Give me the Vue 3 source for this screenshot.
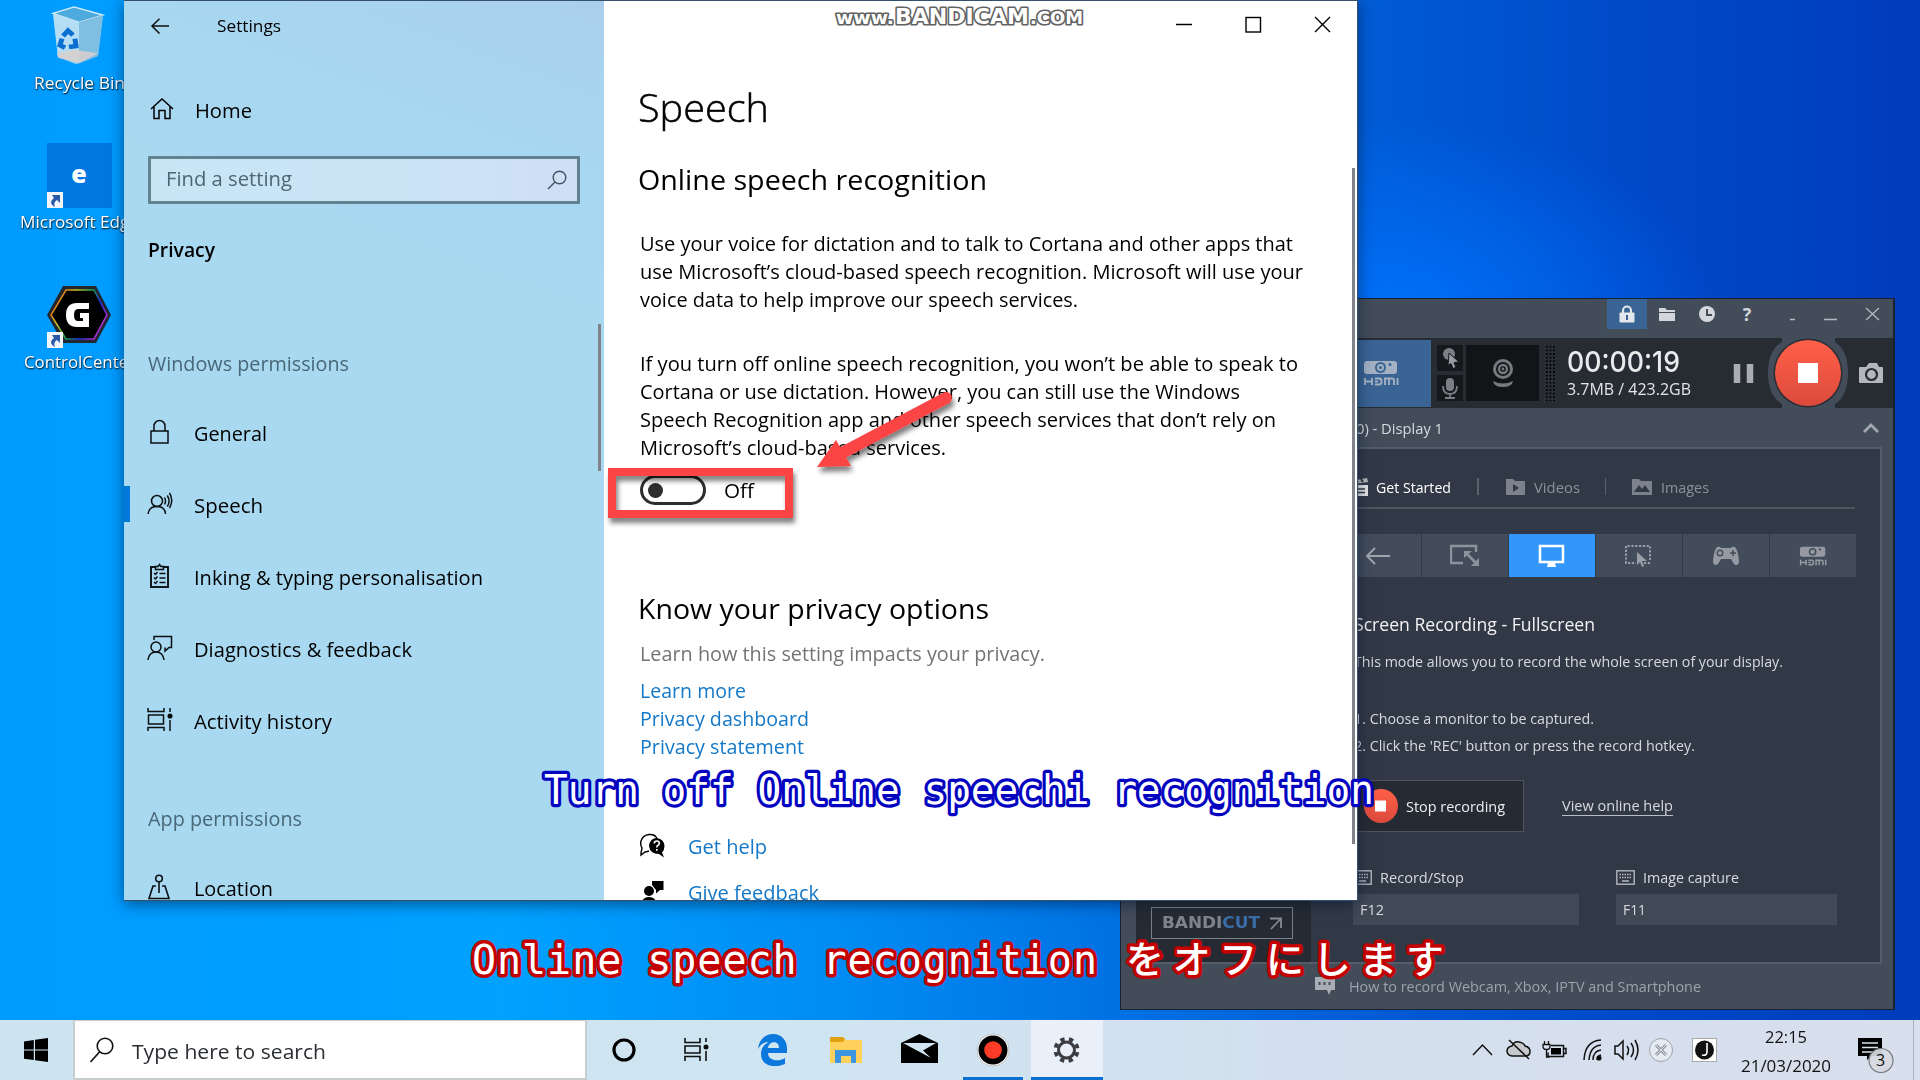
<script setup>
// Squeezes a line of text to the given width and keeps the layout box in step.
const vFit = {
  mounted(el, { value }) {
    const natural = el.getBoundingClientRect().width
    if (!natural) return
    el.style.transformOrigin = '0 50%'
    el.style.transform = `scaleX(${value / natural})`
    el.style.marginRight = `${value - natural}px`
  },
}

const nav = [
  { id: 'lock', label: 'General', w: 73 },
  { id: 'speech', label: 'Speech', w: 69, active: true },
  { id: 'ink', label: 'Inking & typing personalisation', w: 289 },
  { id: 'diag', label: 'Diagnostics & feedback', w: 218 },
  { id: 'history', label: 'Activity history', w: 138 },
]
const p1 = [
  ['Use your voice for dictation and to talk to Cortana and other apps that', 653],
  ['use Microsoft’s cloud-based speech recognition. Microsoft will use your', 663],
  ['voice data to help improve our speech services.', 438],
]
const p2 = [
  ['If you turn off online speech recognition, you won’t be able to speak to', 658],
  ['Cortana or use dictation. However, you can still use the Windows', 600],
  ['Speech Recognition app and other speech services that don’t rely on', 636],
  ['Microsoft’s cloud-based services.', 306],
]
const links = [
  ['Learn more', 106],
  ['Privacy dashboard', 169],
  ['Privacy statement', 164],
]
</script>

<template>
  <div class="desktop">
    <div class="shortcuts">
      <div class="shortcut">
        <svg width="66" height="60" viewBox="0 0 66 66" preserveAspectRatio="none">
          <path d="M7 8 28 1 57 10 52 55 30 64 12 56Z" fill="#9fd3ef" opacity=".85" />
          <path d="M7 8 28 1 57 10 33 18Z" fill="#4ea9dc" stroke="#d8eef8" stroke-width="1.5" />
          <path d="M33 18 57 10 52 55 33 63Z" fill="#7fbfe2" />
          <path d="M7 8 33 18V63L12 56Z" fill="#b5def5" />
          <path d="M11 52 28 48 52 52 33 63 12 57Z" fill="#d9cfcc" opacity=".85" />
          <g fill="none" stroke="#0a6fd0" stroke-width="5">
            <path d="M17 33l5-6 5 5" /><path d="M29 36l1 8-7 1" /><path d="M19 46l-5-3 2-7" />
          </g>
        </svg>
        <span v-fit="91" class="s-label">Recycle Bin</span>
      </div>
      <div class="shortcut">
        <div class="edge-tile">
          <span class="edge-e">e</span>
          <svg class="link-arrow" width="16" height="16" viewBox="0 0 16 16"><rect width="16" height="16" fill="#f2f6fa" /><path d="M5 3h8v8l-3-3c-3 2-3 4-2 7C3 12 3 9 7 6Z" fill="#2a59a8" /></svg>
        </div>
        <span v-fit="119" class="s-label">Microsoft Edge</span>
      </div>
      <div class="shortcut">
        <div class="hex">
          <svg width="64" height="58" viewBox="0 0 64 58">
            <defs><linearGradient id="rgb" x1="0" x2="1" y1="0" y2=".5"><stop offset="0" stop-color="#e02a10" /><stop offset=".35" stop-color="#d0c020" /><stop offset=".6" stop-color="#18a050" /><stop offset=".8" stop-color="#2030e0" /><stop offset="1" stop-color="#a030d0" /></linearGradient></defs>
            <path d="M16 0H49L64 29 49 57H16L0 29Z" fill="#22262e" />
            <path d="M19 4H47L60 29 47 53H19L4 29Z" fill="#000" stroke="url(#rgb)" stroke-width="1.6" />
            <path d="M42 17H30Q19 17 19 29T30 41H42V27H33V32H36V35H31Q27 35 27 29T31 23H42Z" fill="#fff" />
          </svg>
          <svg class="link-arrow" width="16" height="16" viewBox="0 0 16 16"><rect width="16" height="16" fill="#f2f6fa" /><path d="M5 3h8v8l-3-3c-3 2-3 4-2 7C3 12 3 9 7 6Z" fill="#2a59a8" /></svg>
        </div>
        <span v-fit="111" class="s-label">ControlCenter</span>
      </div>
    </div>

    <section class="bandi">
      <header class="b-head">
        <span class="b-lock"><svg width="18" height="18" viewBox="0 0 18 18"><path d="M5 8V5.500a4 4 0 0 1 8 0V8" fill="none" stroke="#e4e8ed" stroke-width="2.200" /><rect x="1.500" y="7.500" width="15" height="10" rx="1" fill="#e4e8ed" /><path d="M9 10v5" stroke="#3a6494" stroke-width="2" /></svg></span>
        <svg width="40" height="30" viewBox="0 0 40 30"><path d="M12 9h6l2 2h8v2H12ZM12 14H28V22H12Z" fill="#d3d7dc" /></svg>
        <svg width="40" height="30" viewBox="0 0 40 30"><circle cx="20" cy="15" r="8" fill="#d3d7dc" /><path d="M20 10v6h5" fill="none" stroke="#434c59" stroke-width="2" /></svg>
        <span class="q">?</span>
        <svg width="125" height="30" viewBox="6 0 125 30"><path d="M29 20.500h5M63 20.500h13" stroke="#b4bac2" stroke-width="1.500" /><path d="M105 9l13 12M118 9l-13 12" stroke="#b4bac2" stroke-width="1.300" /></svg>
      </header>
      <div class="b-tools">
        <span class="hdmi-tile">
          <svg width="36" height="26" viewBox="0 0 36 26"><rect x="1" y="1" width="33" height="13" rx="3" fill="#a3b1c3" /><circle cx="17.500" cy="7.500" r="5.500" fill="#3a6494" /><circle cx="17.500" cy="7.500" r="3.500" fill="#a3b1c3" /><circle cx="17.500" cy="7.500" r="1.600" fill="#3a6494" /><circle cx="27" cy="4.500" r="1.500" fill="#3a6494" /><path d="M2 18v7M2 21.500h7M9 18v7M12 18.500h4q2.500 0 2.500 2.500v1q0 2.500-2.500 2.500h-4M12 21.500h3M22 25v-6.500h4v6.500M26 18.500h3q2 0 2 2v4.500M34.500 18v7" fill="none" stroke="#a3b1c3" stroke-width="1.900" /></svg>
        </span>
        <div class="minis">
          <span><svg width="26" height="26" viewBox="0 0 26 26"><circle cx="12" cy="9" r="6" fill="#7b7f85" /><path d="M12 8l10 9-5 .5 2 5-3 1-2-5-3 2Z" fill="#999da3" stroke="#16181b" /></svg></span>
          <span><svg width="26" height="26" viewBox="0 0 26 26"><rect x="9" y="3" width="8" height="13" rx="4" fill="#7b7f85" /><path d="M6 11q0 8 7 8t7-8M13 19v4M8 23h10" fill="none" stroke="#7b7f85" stroke-width="1.800" /></svg></span>
        </div>
        <span class="cam"><svg width="30" height="32" viewBox="0 0 30 32"><circle cx="15" cy="12" r="8.500" fill="none" stroke="#76797e" stroke-width="3" /><circle cx="15" cy="12" r="4" fill="none" stroke="#76797e" stroke-width="2.400" /><circle cx="15" cy="12" r="1.400" fill="#76797e" /><path d="M5 24q10 5 20 0-1 6-10 6T5 24Z" fill="#76797e" /></svg></span>
        <span class="meter"></span>
        <div class="clock">
          <span v-fit="113" class="digits">00:00:19</span>
          <span v-fit="124" class="size">3.7MB / 423.2GB</span>
        </div>
        <svg class="rec" width="194" height="70" viewBox="0 0 194 70">
          <path d="M48 26v19M61 26v19" stroke="#a9adb3" stroke-width="6.500" />
          <path d="M93 0H146V4Q159 12 159 35T146 66V70H93V66Q79 58 79 35T93 4Z" fill="#434c59" />
          <circle cx="119" cy="35" r="34.500" fill="#2a2d34" />
          <circle cx="119" cy="35" r="33" fill="url(#redg)" />
          <defs><linearGradient id="redg" x1="0" x2="0" y1="0" y2="1"><stop offset="0" stop-color="#ff6049" /><stop offset="1" stop-color="#dc4a3b" /></linearGradient></defs>
          <rect x="109" y="25" width="20" height="20" fill="#fff" />
          <path d="M171 29h6l3-4h8l2 4h3q1 0 1 1v14q0 1-1 1h-22q-1 0-1-1V30q0-1 1-1Z" fill="#b3b7bd" />
          <circle cx="182.500" cy="36.500" r="5.500" fill="none" stroke="#272c33" stroke-width="2.200" />
        </svg>
      </div>
      <div class="b-info">
        <span v-fit="87">0) - Display 1</span>
        <svg width="18" height="12" viewBox="0 0 18 12"><path d="M2 10l7-7 7 7" fill="none" stroke="#a3a8b0" stroke-width="2.800" /></svg>
      </div>
      <div class="b-body">
        <aside class="b-side">
          <div class="bandicut"><b v-fit="98"><i>BANDI</i><em>CUT</em></b><svg width="14" height="14" viewBox="0 0 14 14"><path d="M1 2.500H12V12M12 2.500 2 13" fill="none" stroke="#858b94" stroke-width="1.800" /></svg></div>
        </aside>
        <main class="b-main">
          <div class="tabs">
            <svg width="18" height="20" viewBox="0 0 18 20"><path d="M0 8H17V19H0Z" fill="#e6e6e6" /><path d="M0 4 16 1l1 4L1 7.500Z" fill="#bbb" /><path d="M5 3l2 3M10 2l2 3" stroke="#323946" stroke-width="2" /><path d="M4 12h10M4 15.500h10" stroke="#323946" stroke-width="1.500" /></svg>
            <span v-fit="75" class="on">Get Started</span><i class="sep"></i>
            <svg width="19" height="18" viewBox="0 0 19 18"><path d="M0 1H7l2 2h10V17H0Z" fill="#7b828c" /><path d="M7 6l6 4-6 4Z" fill="#323946" /></svg>
            <span v-fit="46" class="tx">Videos</span><i class="sep s2"></i>
            <svg width="20" height="18" viewBox="0 0 20 18"><path d="M0 1H7l2 2h11V17H0Z" fill="#7b828c" /><path d="M2 14l5-7 3 4 3-4 5 7Z" fill="#323946" /></svg>
            <span v-fit="48" class="tx">Images</span>
          </div>
          <div class="modes">
            <span><svg width="26" height="18" viewBox="0 0 26 18"><path d="M25 9H2M10 1 2 9l8 8" fill="none" stroke="#a1a6ae" stroke-width="2" /></svg></span>
            <span><svg width="30" height="24" viewBox="0 0 30 24"><path d="M13 19H1V2H26V8" fill="none" stroke="#8d939c" stroke-width="2.400" /><path d="M16 9l11 11" stroke="#8d939c" stroke-width="2.600" /><path d="M14 7h8l-8 7ZM29 22h-8l8-8Z" fill="#8d939c" /></svg></span>
            <span class="sel"><svg width="28" height="24" viewBox="0 0 28 24"><rect x="2" y="2" width="23" height="16" fill="none" stroke="#fff" stroke-width="2.500" /><path d="M10 19h7l1 4H9Z" fill="#fff" /></svg></span>
            <span><svg width="30" height="24" viewBox="0 0 30 24"><path d="M26 16V2H2V19H12M20 19h6" fill="none" stroke="#9ba0a8" stroke-width="2" stroke-dasharray="2.200 1.600" /><path d="M13 8l10 9h-5l2 5-2 1-2-5-3 3Z" fill="#9ba0a8" /></svg></span>
            <span><svg width="30" height="22" viewBox="0 0 30 22"><path d="M6 2q3-1 4 1h10q1-2 4-1 3 3 4 14 0 4-3 4-2 0-5-6H10q-3 6-5 6-3 0-3-4Q3 5 6 2Z" fill="#959aa2" /><circle cx="9" cy="8" r="2.800" fill="none" stroke="#434c59" stroke-width="1.400" /><path d="M22 5v6M19 8h6" stroke="#434c59" stroke-width="1.500" /></svg></span>
            <span><svg width="28" height="20" viewBox="0 0 36 26"><rect x="1" y="1" width="33" height="13" rx="3" fill="#959aa2" /><circle cx="17.500" cy="7.500" r="5" fill="#434c59" /><circle cx="17.500" cy="7.500" r="3" fill="#959aa2" /><circle cx="27" cy="4.500" r="1.500" fill="#434c59" /><path d="M2 18v7M2 21.500h7M9 18v7M12 18.500h4q2.500 0 2.500 2.500v1q0 2.500-2.500 2.500h-4M12 21.500h3M22 25v-6.500h4v6.500M26 18.500h3q2 0 2 2v4.500M34.500 18v7" fill="none" stroke="#959aa2" stroke-width="2" /></svg></span>
          </div>
          <h3><span v-fit="241">Screen Recording - Fullscreen</span></h3>
          <p class="mode-text"><span v-fit="429">This mode allows you to record the whole screen of your display.</span></p>
          <ol class="steps">
            <li><span v-fit="240">1. Choose a monitor to be captured.</span></li>
            <li><span v-fit="341">2. Click the 'REC' button or press the record hotkey.</span></li>
          </ol>
          <div class="actions">
            <div class="stop">
              <svg width="34" height="36" viewBox="0 0 34 36"><ellipse cx="17" cy="18" rx="17" ry="17" fill="url(#redg)" /><rect x="11" y="12.500" width="11" height="11" fill="#fff" /></svg>
              <span v-fit="99">Stop recording</span>
            </div>
            <span v-fit="111" class="help">View online help</span>
          </div>
          <div class="keys">
            <div class="key k1">
              <label><svg width="19" height="15" viewBox="0 0 19 15"><rect x=".8" y=".8" width="17.400" height="13.400" fill="none" stroke="#b3b8bf" stroke-width="1.400" /><path d="M3.500 4.500h12M3.500 7.500h12" stroke="#b3b8bf" stroke-width="1.500" stroke-dasharray="1.500 1" /><path d="M6 11h7" stroke="#b3b8bf" stroke-width="1.500" /></svg><span v-fit="84">Record/Stop</span></label>
              <div class="field"><span v-fit="24">F12</span></div>
            </div>
            <div class="key k2">
              <label><svg width="19" height="15" viewBox="0 0 19 15"><rect x=".8" y=".8" width="17.400" height="13.400" fill="none" stroke="#b3b8bf" stroke-width="1.400" /><path d="M3.500 4.500h12M3.500 7.500h12" stroke="#b3b8bf" stroke-width="1.500" stroke-dasharray="1.500 1" /><path d="M6 11h7" stroke="#b3b8bf" stroke-width="1.500" /></svg><span v-fit="96">Image capture</span></label>
              <div class="field"><span v-fit="23">F11</span></div>
            </div>
          </div>
        </main>
      </div>
      <footer class="b-foot">
        <svg width="22" height="20" viewBox="0 0 22 20"><path d="M1 1H21V14H17L15 19 13 14H1Z" fill="#a9aeb6" /><path d="M5.500 6v3M10.500 6v3M15.500 6v3" stroke="#434c59" stroke-width="2" /></svg>
        <span v-fit="352">How to record Webcam, Xbox, IPTV and Smartphone</span>
      </footer>
    </section>

    <section class="settings">
      <aside class="side">
        <div class="bar">
          <svg width="20" height="18" viewBox="0 0 20 18"><path d="M19 8H2M9.500 0.700 2 8l7.500 7.500" fill="none" stroke="#111" stroke-width="1.500" /></svg>
          <span v-fit="64">Settings</span>
        </div>
        <div class="home">
          <svg width="24" height="22" viewBox="0 0 24 22"><path d="M1 11 12 1 23 11M4 9V20.500H9V12.500h6V20.500H20V9" fill="none" stroke="#000" stroke-width="1.500" /></svg>
          <span v-fit="57">Home</span>
        </div>
        <div class="find">
          <span v-fit="126">Find a setting</span>
          <svg width="20" height="20" viewBox="0 0 20 20"><circle cx="12.500" cy="7.500" r="6.300" fill="none" stroke="#3d5561" stroke-width="1.400" /><path d="M8 12 1 19" stroke="#3d5561" stroke-width="1.500" /></svg>
        </div>
        <div class="privacy"><span v-fit="67">Privacy</span></div>
        <div class="group g1"><span v-fit="201">Windows permissions</span></div>
        <nav>
          <div v-for="n in nav" :key="n.id" class="item" :class="{ active: n.active }">
            <svg width="26" height="26" viewBox="0 0 26 26" fill="none" stroke="#0b0f12" stroke-width="1.500">
              <g v-if="n.id === 'lock'"><rect x="4" y="12" width="17" height="12" /><path d="M7 12V7a5.500 5.500 0 0 1 11 0V12" /></g>
              <g v-if="n.id === 'speech'"><circle cx="10" cy="10" r="5.500" /><path d="M1 23q1-7.500 9-7.500t8.500 7.500M17.500 6.500q2 3.500 0 7M20.300 4.500q3.500 5.500 0 11M22.500 2q4.500 7.500 0 15" /></g>
              <g v-if="n.id === 'ink'"><rect x="4" y="4" width="17" height="20" stroke-width="1.900" /><path d="M8.500 6.500V3.500H11L12.500 1.500 14 3.500H16.500V6.500Z" fill="#a8d9f1" /><path d="M12.500 10.500h6M12.500 15h6M12.500 19.500h6M7 10l1.500 1.500 2-2.500M7 14.500 8.500 16l2-2.500M7 19l1.500 1.500 2-2.500" /></g>
              <g v-if="n.id === 'diag'"><path d="M7 5V1.500H24.500V12.500H22L18 16V12.500" /><circle cx="9" cy="12" r="5" /><path d="M1 25q1-8 8-8t8 8" /></g>
              <g v-if="n.id === 'history'"><path d="M1 1v3.500h16V1M1 24v-3.500h16V24M1.500 8h15v9h-15ZM23 1v4M23 13v11" /><circle cx="23" cy="9" r="1.800" fill="#000" /></g>
            </svg>
            <span v-fit="n.w">{{ n.label }}</span>
          </div>
        </nav>
        <div class="group g2"><span v-fit="154">App permissions</span></div>
        <div class="item loc">
          <svg width="26" height="26" viewBox="0 0 26 26" fill="none" stroke="#0b0f12" stroke-width="1.600"><circle cx="12" cy="4.500" r="3.300" /><path d="M12 8v11M9 12H6L2 24.500H22L18 12h-3" /></svg>
          <span v-fit="79">Location</span>
        </div>
        <i class="thumb side-thumb"></i>
      </aside>
      <main class="content">
        <div class="controls">
          <svg width="69" height="50" viewBox="0 0 69 50"><path d="M26 23.500H42" stroke="#000" stroke-width="1.500" /></svg>
          <svg width="69" height="50" viewBox="0 0 69 50"><rect x="27" y="16.500" width="14.500" height="14.500" fill="none" stroke="#000" stroke-width="1.400" /></svg>
          <svg width="69" height="50" viewBox="0 0 69 50"><path d="M27 16 42 31M42 16 27 31" stroke="#000" stroke-width="1.400" /></svg>
        </div>
        <h1><span v-fit="131">Speech</span></h1>
        <h2 class="first"><span v-fit="349">Online speech recognition</span></h2>
        <div class="para a"><div v-for="l in p1" :key="l[0]"><span v-fit="l[1]">{{ l[0] }}</span></div></div>
        <div class="para b"><div v-for="l in p2" :key="l[0]"><span v-fit="l[1]">{{ l[0] }}</span></div></div>
        <div class="toggle-row"><span class="toggle"><i></i></span><span v-fit="30">Off</span></div>
        <h2 class="second"><span v-fit="351">Know your privacy options</span></h2>
        <div class="learn"><span v-fit="405">Learn how this setting impacts your privacy.</span></div>
        <div class="links"><a v-for="l in links" :key="l[0]"><span v-fit="l[1]">{{ l[0] }}</span></a></div>
        <div class="support">
          <a><svg width="26" height="26" viewBox="0 0 26 26"><path d="M9 18q-3 1-4 1l-4 3V20l1-5q-2-3-1-7 2-6 8-6.500 6-.5 8 4" fill="none" stroke="#000" stroke-width="1.400" /><path d="M17 5q7 1 7.500 8 0 4-2.500 6.500l2 5-5-3.500q-9 0-10-8 1-8 8-8Z" fill="#000" /><path d="M14.300 10.500q0-2.500 2.500-2.500t2.500 2.200q0 1.300-1.300 2t-1.200 2.300M16.800 16v1.800" fill="none" stroke="#fff" stroke-width="1.600" /></svg><span v-fit="79">Get help</span></a>
          <a><svg width="26" height="26" viewBox="0 0 26 26"><circle cx="9" cy="12" r="5" fill="#000" /><path d="M1 26q1-8 8-8t8 8ZM12 2H23.500V11H20l-4 3.500V11L12 6Z" fill="#000" /></svg><span v-fit="131">Give feedback</span></a>
        </div>
        <i class="thumb main-thumb"></i>
      </main>
    </section>

    <svg class="overlay" width="1920" height="1080" viewBox="0 0 1920 1080">
      <defs><filter id="sh" x="-20%" y="-20%" width="140%" height="150%"><feDropShadow dx="2" dy="5" stdDeviation="2.500" flood-color="#000" flood-opacity=".5" /></filter></defs>
      <g filter="url(#sh)">
        <path d="M608 468H793V518H608ZM616 476V510H785V476Z" fill="#fb4444" fill-rule="evenodd" />
        <path d="M840 454 946 398" stroke="#fb4444" stroke-width="12" stroke-linecap="round" />
        <path d="M817 467 836 440 851 466Z" fill="#fb4444" />
      </g>
      <g class="mark"><text x="836" y="23.500" font-size="17" textLength="58" lengthAdjust="spacingAndGlyphs">www.</text><text x="895" y="23.500" font-size="21" textLength="134" lengthAdjust="spacingAndGlyphs">BANDICAM</text><text x="1030" y="23.500" font-size="17" textLength="53" lengthAdjust="spacingAndGlyphs">.COM</text></g>
      <text class="cap blue" x="544" y="804" textLength="830" lengthAdjust="spacingAndGlyphs">Turn off Online speechi recognition</text>
      <text class="cap red" x="472" y="973.500" textLength="625" lengthAdjust="spacing">Online speech recognition</text>
      <text class="cap red jp" x="1126" y="973" textLength="318" lengthAdjust="spacing">をオフにします</text>
    </svg>

    <footer class="taskbar">
      <span class="start"><svg width="24" height="24" viewBox="0 0 24 24"><path d="M0 3.500 9.800 2V11.500H0ZM11 1.800 24 0V11.500H11ZM0 12.600H9.800V22L0 20.700ZM11 12.600H24V24L11 22.200Z" fill="#000" /></svg></span>
      <div class="search"><svg width="26" height="26" viewBox="0 0 26 26"><circle cx="16" cy="9" r="7.800" fill="none" stroke="#111" stroke-width="1.600" /><path d="M10.500 15 1.500 25" stroke="#111" stroke-width="1.700" /></svg><span v-fit="194">Type here to search</span></div>
      <div class="apps">
        <svg width="73" height="60" viewBox="587 1020 73 60"><circle cx="624" cy="1050" r="10" fill="none" stroke="#000" stroke-width="3.200" /></svg>
        <svg width="73" height="60" viewBox="660 1020 73 60" fill="none" stroke="#111" stroke-width="1.600"><path d="M685 1038v4.500h15V1038M685 1061v-4.500h15V1061M685 1046h15v7h-15ZM706 1038v4M706 1051v10" /><circle cx="706" cy="1047" r="1.700" fill="#000" /></svg>
        <svg width="73" height="60" viewBox="733 1020 73 60"><path d="M758 1049C759 1039 766 1034 773 1034 782 1034 787 1041 787 1048V1053H768C768 1061 779 1062 785 1058V1064C776 1068 761 1067 761 1054 761 1048 764 1044 769 1042 763 1042 760 1045 758 1049ZM768 1048H779C779 1040 769 1041 768 1048Z" fill="#0b78dd" /></svg>
        <svg width="73" height="60" viewBox="806 1020 73 60"><path d="M830 1037h13l3 3h16v23h-32Z" fill="#ffd05a" /><path d="M830 1037h13l2 2-2 3h-13Z" fill="#e0a010" /><path d="M835 1063v-13h21v13h-5v-7h-10v7Z" fill="#3c95e0" /></svg>
        <svg width="82" height="60" viewBox="879 1020 82 60"><path d="M901 1043 919.500 1034 938 1043V1063H901Z" fill="#000" /><path d="M903 1043H936L923 1050.500 931 1058Z" fill="#d1e4f1" /></svg>
        <svg width="70" height="60" viewBox="961 1020 70 60"><circle cx="993" cy="1050" r="16" fill="#fff" stroke="#aaa" stroke-width=".7" /><circle cx="993" cy="1050" r="14.500" fill="#000" /><circle cx="993" cy="1050" r="8.800" fill="#fc3c26" /><path d="M963 1077h60v3h-60Z" fill="#0a6fce" /></svg>
        <svg class="cur" width="72" height="60" viewBox="1031 1020 72 60"><g transform="translate(1066.500 1050)" fill="none" stroke="#3b3d42"><circle r="8" stroke-width="3" /><circle r="11" stroke-width="4" stroke-dasharray="4.320 4.320" transform="rotate(11)" /></g><path d="M1031 1077h72v3h-72Z" fill="#0a6fce" /></svg>
      </div>
      <div class="tray">
        <svg width="262" height="60" viewBox="1465 1020 262 60" fill="none" stroke="#111" stroke-width="1.500">
          <path d="M1473 1055l9.500-10 9.500 10" />
          <path d="M1512 1056q-5-1-5-5t5-5q2-5 7-4t6 4q5 1 5 5.500t-5 4.500Z" fill="#c7c9cc" /><path d="M1509 1040l20 19" />
          <path d="M1551 1045.500h12.500v11H1548v-4M1563.500 1048.500h2.500v5h-2.500" /><path d="M1551 1048h10v6.500h-10Z" fill="#000" stroke="none" /><path d="M1543 1044.500h7v2q0 3-3.500 3t-3.500-3ZM1544.500 1041v3M1548.500 1041v3M1546.500 1050v7h3" stroke-width="1.300" />
          <path d="M1584 1060q1-19 17-20M1589 1060q1-14 12-15M1593 1060q0-9 8-10M1597 1060q0-4 4-5" /><circle cx="1599" cy="1058" r="1.800" fill="#000" />
          <path d="M1615 1046v8h3l5 5v-18l-5 5ZM1627 1046q3 4 0 9M1631 1043q5 7 0 14M1635 1040q6 10 0 20" />
          <circle cx="1661" cy="1050" r="11.500" fill="#e5ebf3" stroke="#9da1a8" stroke-width="1" /><path d="M1656 1045l10 10M1666 1045l-10 10" stroke="#8f949b" stroke-width="3" /><path d="M1656 1045l10 10M1666 1045l-10 10" stroke="#e5ebf3" stroke-width="1" />
          <rect x="1692.500" y="1038.500" width="24" height="23" fill="#fff" stroke="#aaa" stroke-width="1" /><circle cx="1704.500" cy="1050" r="9.500" fill="#111" stroke="none" /><path d="M1707 1043v9q0 4-5 3" stroke="#fff" stroke-width="1.600" />
        </svg>
        <div class="date"><span v-fit="42">22:15</span><span v-fit="90">21/03/2020</span></div>
        <div class="note">
          <svg width="40" height="36" viewBox="0 0 40 36"><path d="M1 1H25V19H15L10 23V19H1Z" fill="#000" /><path d="M5 6h16M5 10.500h16M5 15h11" stroke="#dce2ee" stroke-width="1.600" /><circle cx="24" cy="23.500" r="12" fill="#d6d9df" fill-opacity=".93" stroke="#777b80" stroke-width="1.200" /></svg>
          <b>3</b>
        </div>
      </div>
    </footer>
  </div>
</template>

<style>
body { margin: 0; overflow: hidden; }
</style>

<style scoped>
* { box-sizing: border-box; }
.desktop {
  position: relative; width: 1920px; height: 1080px; overflow: hidden;
  font-family: "Open Sans", "Noto Sans", sans-serif; white-space: nowrap;
  background:
    radial-gradient(ellipse 330px 200px at 1390px 320px, rgba(0, 115, 255, .9), transparent),
    linear-gradient(90deg, #009bff 0, #00a1ff 500px, #008bf3 850px, #0073e4 1100px, #0059d4 1400px, #0048c8 1650px, #003cbc 1920px);
}
.desktop span, .bandicut b { display: inline-block; }
h1, h2, h3, p, ol { margin: 0; padding: 0; font-weight: 400; list-style: none; }
svg { display: block; flex: none; }

.shortcuts { width: 158px; padding-top: 6px; display: flex; flex-direction: column; }
.shortcut { height: 139.500px; display: flex; flex-direction: column; align-items: center; }
.s-label { font-size: 16px; line-height: 24px; color: #fff; text-shadow: 0 1px 2px #000a, 1px 1px 1px #0008; margin-top: 5px; }
.edge-tile { width: 65px; height: 65px; margin-top: -3px; background: #0078e0; display: flex; align-items: center; justify-content: center; position: relative; }
.edge-tile + .s-label { margin-top: 2px; }
.edge-e { color: #fff; font: 800 25px/30px "Open Sans", sans-serif; margin-top: -4px; }
.link-arrow { position: absolute; left: 0; bottom: 0; }
.hex { position: relative; width: 64px; height: 60px; margin-top: 1px; padding-bottom: 2px; }
.hex .link-arrow { bottom: -2px; }
.hex + .s-label { margin-top: 4px; }

.settings { position: absolute; left: 124px; top: 0; width: 1234px; height: 901px; display: flex; border: 1px solid #35506a; border-width: 1px 1px 1px 0; overflow: hidden; box-shadow: 0 3px 14px rgba(0, 20, 50, .55); font-size: 19.700px; color: #000; }
.side { position: relative; width: 480px; height: 900px; flex: none; background: linear-gradient(200deg, #aacfed 0, #a8d6f0 130px, #a8d9f1 300px); }
.bar { height: 50px; display: flex; align-items: center; padding-left: 26px; }
.bar svg { margin-top: 1px; }
.bar span { font-size: 16.700px; margin: -2px 0 0 47px; }
.home { height: 40px; margin-top: 39px; padding-left: 26px; display: flex; align-items: center; }
.home svg { margin-top: -2px; }
.home span { margin-left: 21px; }
.find { margin: 26px 0 0 24px; width: 432px; height: 48px; border: 3px solid #628191; background: linear-gradient(90deg, #c8e5f6, #cbe4f6 60%, #cfdff6); display: flex; align-items: center; justify-content: space-between; padding: 0 10px 0 15px; color: #4d6674; }
.find span { margin-top: -3px; }
.privacy { height: 40px; line-height: 40px; margin: 26px 0 0 24px; font-weight: 600; }
.group { height: 40px; line-height: 40px; padding-left: 24px; color: #486777; }
.g1 { margin-top: 74px; }
.g2 { margin-top: 41px; }
nav { margin-top: 14px; }
.item { height: 72px; display: flex; align-items: center; padding-left: 23px; position: relative; }
.item svg { margin-top: -5px; }
.item span { margin: -2px 0 0 21px; }
.item.active::before { content: ""; position: absolute; left: 0; top: 16px; width: 6px; height: 36px; background: #0078dc; }
.loc { margin-top: 14px; }
.thumb { position: absolute; background: #80848a; }
.side-thumb { left: 474px; top: 323px; width: 3px; height: 147px; }
.main-thumb { right: 2px; top: 167px; width: 3px; height: 676px; }
.content { position: relative; flex: 1; height: 900px; padding-left: 36px; background: #fff; }
.controls { height: 50px; display: flex; justify-content: flex-end; }
h1 { font-size: 38.500px; height: 50px; line-height: 50px; margin: 31px 0 0 -2px; font-weight: 300; -webkit-text-stroke: .5px #000; }
h2 { font-size: 27.700px; height: 40px; line-height: 40px; margin-left: -2px; }
h2.first { margin-top: 27px; }
h2.second { margin-top: 83.600px; }
.para div { height: 27.800px; line-height: 27.800px; }
.a { margin-top: 31px; }
.b { margin-top: 37px; }
.toggle-row { margin-top: 14.200px; height: 29px; display: flex; align-items: center; }
.toggle-row span + span { margin-top: 1px; }
.desktop .toggle { width: 66px; height: 30px; border: 3px solid #2d2d2d; border-radius: 15px; display: flex; align-items: center; padding-left: 5px; margin-right: 18px; }
.toggle i { width: 15px; height: 15px; border-radius: 50%; background: #2d2d2d; }
.learn { height: 28px; line-height: 28px; margin-top: 11.800px; color: #747474; }
.links { margin-top: 8.800px; }
.links a { display: block; height: 28px; line-height: 28px; color: #1478c8; }
.support { margin-top: 62.400px; }
.support a { height: 46px; display: flex; align-items: center; color: #1478c8; }
.support span { margin-left: 22px; }

.overlay { position: absolute; left: 0; top: 0; }
.mark text { font-family: "DejaVu Sans", sans-serif; font-weight: 700; fill: #fff; stroke: #626262; stroke-width: 3.200px; paint-order: stroke; stroke-linejoin: round; }
.cap { font-family: "DejaVu Sans Mono", monospace; font-size: 40px; fill: #fff; stroke-width: 6px; paint-order: stroke; stroke-linejoin: round; }
.blue { stroke: #0404c0; stroke-width: 6.500px; }
.red { stroke: #c40000; stroke-width: 7px; }
.jp { font-family: "Noto Sans CJK JP", sans-serif; font-weight: 500; font-size: 38px; }

.bandi { position: absolute; left: 1120px; top: 298px; width: 775px; height: 712px; border: 1px solid #1b2130; border-right-width: 2px; background: #434c59; display: flex; flex-direction: column; color: #d6dade; font-size: 15.200px; }
.b-head { height: 39px; display: flex; justify-content: flex-end; padding-right: 1px; }
.desktop .b-lock { width: 40px; height: 30px; background: #3a6494; display: flex; align-items: center; justify-content: center; }
.q { width: 40px; text-align: center; font-weight: 700; font-size: 18px; line-height: 30px; color: #d3d7dc; }
.b-tools { height: 70px; background: #272c33; display: flex; align-items: center; padding-left: 215px; }
.desktop .hdmi-tile { width: 95px; height: 67px; background: #3a6494; display: flex; align-items: center; padding-left: 27px; }
.minis { margin-left: 6px; display: flex; flex-direction: column; gap: 4px; }
.desktop .minis span { width: 26px; height: 26px; background: #16181b; }
.desktop .cam { margin-left: 3px; width: 73px; height: 56px; background: #121417; display: flex; align-items: center; justify-content: center; }
.meter { margin-left: 6px; width: 11px; height: 56px; background: radial-gradient(#000 45%, transparent 50%) 0 0 / 3.600px 3.600px #2b3037; }
.clock { margin-left: 11px; width: 131px; height: 56px; display: flex; flex-direction: column; align-items: flex-start; }
.digits { font: 500 29px/34px Inter, sans-serif; color: #e8eaec; }
.size { font-size: 17px; line-height: 24px; color: #e2e4e6; margin-top: -2px; }
.rec { margin-left: -9px; }
.b-info { height: 39px; display: flex; align-items: center; justify-content: space-between; padding: 0 13px 0 235px; }
.b-body { height: 517px; display: flex; margin: 0 11px 0 15px; border: 2px solid #545d69; border-left: 0; background: #323946; }
.b-side { width: 175px; background: #262b33; padding: 458px 0 0 15px; flex: none; }
.bandicut { width: 142px; height: 32px; border: 1.500px solid #7a818a; display: flex; align-items: center; justify-content: center; gap: 9px; }
.bandicut b { font: 700 16px/20px "DejaVu Sans", sans-serif; }
.bandicut i { font-style: normal; color: #80858c; }
.bandicut em { font-style: normal; color: #3a6ea8; }
.b-main { flex: 1; padding-left: 38px; }
.tabs { height: 60px; margin-right: 25px; border-bottom: 2px solid #4d5561; display: flex; align-items: center; padding: 17px 0 0 2px; color: #8b919a; }
.tabs .on { color: #fff; margin-left: 7px; }
.sep { width: 1.500px; height: 17px; background: #5a626d; margin: 0 27px 0 26px; }
.s2 { margin: 0 26px 0 25px; }
.tabs .tx { margin-left: 9px; }
.modes { display: flex; gap: 1px; margin-top: 25px; height: 43px; margin-left: -14px; }
.desktop .modes span { width: 86px; background: #434c5a; display: flex; align-items: center; justify-content: center; }
.desktop .modes .sel { background: #3296fa; }
h3 { font-size: 17.700px; height: 30px; line-height: 30px; margin: 32px 0 0 5px; color: #f2f3f4; }
.mode-text { height: 24px; line-height: 24px; margin: 10px 0 0 5px; }
.steps { margin: 32px 0 0 5px; }
.steps li { height: 26.500px; line-height: 26.500px; }
.actions { height: 52px; margin-top: 22px; display: flex; align-items: center; }
.stop { width: 175px; height: 52px; background: #262b33; border: 1px solid #4d5561; display: flex; align-items: center; padding-left: 14px; color: #eceef0; }
.stop span { margin-left: 8px; }
.help { margin-left: 38px; line-height: 19px; border-bottom: 1.500px solid #b9bec5; }
.keys { display: flex; margin-top: 34px; }
.key label { height: 26px; display: flex; align-items: flex-start; gap: 8px; line-height: 23px; }
.key label svg { margin-top: 4px; }
.k1 { width: 226px; margin: 0 37px 0 4px; }
.k2 { width: 221px; }
.field { height: 31px; background: #414957; padding-left: 7px; line-height: 31px; margin-top: 2px; }
.b-foot { height: 44px; display: flex; align-items: center; padding-left: 193px; color: #9ba3ae; }
.b-foot span { margin-left: 13px; }

.taskbar { position: absolute; left: 0; top: 1020px; width: 1920px; height: 60px; display: flex; background: linear-gradient(90deg, #cce5f0 0, #cfe5f1 800px, #d3dfee 1300px, #d8dfed 1920px); color: #111; }
.desktop .start { width: 73px; display: flex; align-items: center; justify-content: center; padding-right: 1px; }
.search { width: 514px; background: #fff; border: 2px solid #c7cccf; border-width: 1px 2px 2px; display: flex; align-items: center; padding-left: 14px; font-size: 20.700px; color: #2a2e33; }
.search span { margin: 2px 0 0 17px; }
.apps { display: flex; }
.cur { background: #eaf0f9; }
.tray { margin-left: auto; display: flex; width: 455px; }
.date { width: 118px; display: flex; flex-direction: column; align-items: center; font-size: 16.200px; padding-top: 3px; }
.date span { line-height: 28.500px; }
.note { position: relative; width: 69px; padding: 17px 0 0 12px; border-right: 1px solid #aab0bb; }
.note b { position: absolute; left: 31px; top: 28px; font-weight: 400; font-size: 16px; line-height: 24px; }
</style>
